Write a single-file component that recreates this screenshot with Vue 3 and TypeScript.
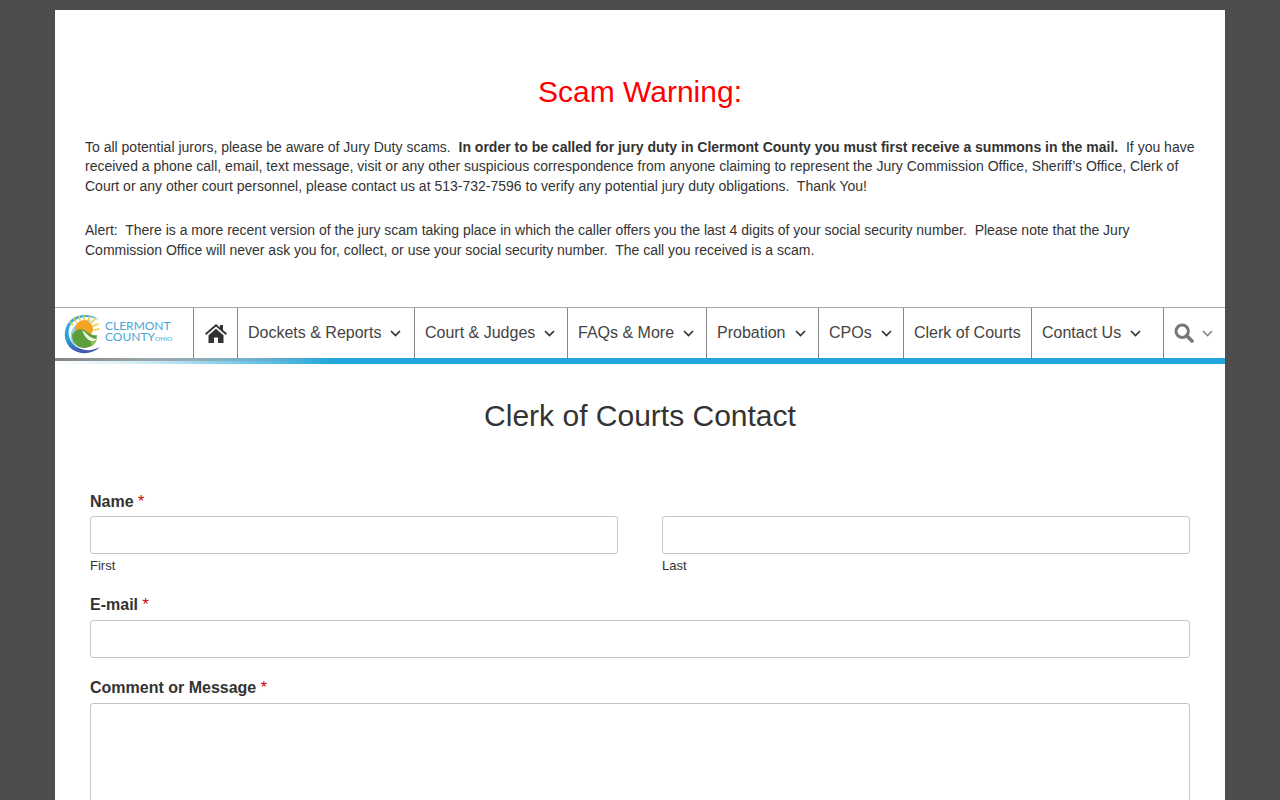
<script setup lang="ts">
interface NavItem { label: string; width: number; caret: boolean }
const items: NavItem[] = [
  { label: 'Dockets & Reports', width: 177, caret: true },
  { label: 'Court & Judges', width: 153, caret: true },
  { label: 'FAQs & More', width: 139, caret: true },
  { label: 'Probation', width: 112, caret: true },
  { label: 'CPOs', width: 85, caret: true },
  { label: 'Clerk of Courts', width: 128, caret: false },
  { label: 'Contact Us', width: 132, caret: true }
]
const rays: string[] = ['M10 13 7 10', 'M13 10 11 6', 'M17 8 16 4', 'M21 7.500 21 3', 'M25 8.500 27 4', 'M28 11 32 7', 'M30 14 35 12', 'M31 18 36 17']
</script>

<template>
  <div class="page">
    <section class="notice">
      <h2 class="warning">Scam Warning:</h2>
      <p class="para first">To all potential jurors, please be aware of Jury Duty scams.&nbsp; <strong>In order to be called for jury duty in Clermont County you must first receive a summons in the mail.</strong>&nbsp; If you have received a phone call, email, text message, visit or any other suspicious correspondence from anyone claiming to represent the Jury Commission Office, Sheriff’s Office, Clerk of Court or any other court personnel, please contact us at 513-732-7596 to verify any potential jury duty obligations.&nbsp; Thank You!</p>
      <p class="para second">Alert:&nbsp; There is a more recent version of the jury scam taking place in which the caller offers you the last 4 digits of your social security number.&nbsp; Please note that the Jury Commission Office will never ask you for, collect, or use your social security number.&nbsp; The call you received is a scam.</p>
    </section>

    <nav class="nav">
      <a class="logo">
        <svg class="logo-mark" width="40" height="42" viewBox="0 0 40 42">
          <defs>
            <linearGradient id="ring" x1="0" y1="0" x2="0.300" y2="1">
              <stop offset="0" stop-color="#35b4dc" />
              <stop offset="0.600" stop-color="#2f9fd4" />
              <stop offset="1" stop-color="#4257b0" />
            </linearGradient>
          </defs>
          <path d="M36 8C28 1 13 1 6 10-1 19 1 32 10 38c8 5 20 4 27-3-9 5-20 4-27-3C4 25 4 15 11 9c7-5 17-5 25-1Z" fill="url(#ring)" />
          <path d="M30 9C20 6 10 12 8 21c-1 6 1 10 4 13-4-10 0-20 9-23 3-1 6-2 9-2Z" fill="#8fd3ea" />
          <g stroke="#f6c935" stroke-width="1.500" stroke-linecap="round">
            <path v-for="ray in rays" :key="ray" :d="ray" />
          </g>
          <circle cx="21" cy="17" r="9" fill="#f5a327" />
          <path d="M9 23c3-6 9-7 14-4 4 3 7 5 11 4 0 8-6 13-13 13S9 31 9 23Z" fill="#5c9e3c" />
          <path d="M19 18c5 3 8 9 15 9-2 2-4 3-6 2-5-2-7-6-9-11Z" fill="#eef6df" />
          <path d="M27 30c3 0 5-1 7-3-1 4-3 6-6 8 1-2 0-4-1-5Z" fill="#8fbe55" />
        </svg>
        <span class="logo-text">
          <span class="logo-line">CLERMONT</span>
          <span class="logo-line">COUNTY<small class="logo-ohio">OHIO</small></span>
        </span>
      </a>
      <a class="cell home" aria-label="Home">
        <svg width="22" height="19" viewBox="0 0 22 19">
          <path fill="#333" d="M11 0 0 9.600l1.200 1.400L11 2.600l9.800 8.400 1.200-1.400L18 6.100V1h-3v2.500ZM3.500 11.300V19h5.500v-5.500h4V19h5.500v-7.700L11 4.800Z" />
        </svg>
      </a>
      <a v-for="item in items" :key="item.label" class="cell item" :style="{ width: item.width + 'px' }">
        <span>{{ item.label }}</span>
        <svg v-if="item.caret" class="caret" width="11" height="7" viewBox="0 0 11 7">
          <path d="M1 1l4.500 4.500L10 1" fill="none" stroke="#333" stroke-width="1.700" />
        </svg>
      </a>
      <a class="cell search" aria-label="Search">
        <svg width="20" height="20" viewBox="0 0 20 20">
          <circle cx="8.200" cy="8.200" r="6.200" fill="none" stroke="#777" stroke-width="3" />
          <path d="M12.800 12.800 18 18" stroke="#777" stroke-width="3.600" stroke-linecap="round" />
        </svg>
        <svg class="caret" width="11" height="7" viewBox="0 0 11 7">
          <path d="M1 1l4.500 4.500L10 1" fill="none" stroke="#888" stroke-width="1.700" />
        </svg>
      </a>
    </nav>
    <div class="accent"></div>

    <main class="content">
      <h1 class="title">Clerk of Courts Contact</h1>
      <form class="form" @submit.prevent>
        <div class="field">
          <div class="label name-label">Name <span class="req">*</span></div>
          <div class="name-row">
            <div class="name-col">
              <input class="input" type="text" aria-label="First" />
              <div class="sub">First</div>
            </div>
            <div class="name-col">
              <input class="input" type="text" aria-label="Last" />
              <div class="sub">Last</div>
            </div>
          </div>
        </div>
        <div class="field email">
          <div class="label">E-mail <span class="req">*</span></div>
          <input class="input" type="email" aria-label="E-mail" />
        </div>
        <div class="field message">
          <div class="label">Comment or Message <span class="req">*</span></div>
          <textarea class="textarea" aria-label="Comment or Message"></textarea>
        </div>
      </form>
    </main>
  </div>
</template>

<style>
html, body { margin: 0; background: #4d4d4d; overflow: hidden; height: 800px; }
</style>

<style scoped>
.page {
  width: 1170px;
  margin: 10px auto 0;
  background: #fff;
  color: #333;
  font-family: "Liberation Sans", Arial, sans-serif;
  height: 790px;
  overflow: hidden;
}
.notice { padding: 0 30px; height: 297px; box-sizing: border-box; overflow: hidden; }
.warning {
  margin: 0;
  padding-top: 63px;
  font-size: 30px;
  line-height: 37px;
  font-weight: 400;
  color: #f00;
  text-align: center;
}
.para { margin: 0; font-size: 14px; line-height: 19.6px; color: #333; }
.first { margin-top: 27.500px; }
.second { margin-top: 23.400px; line-height: 20px; }

.nav {
  display: flex;
  height: 51px;
  box-sizing: border-box;
  border-top: 1px solid #aaa;
  background: #fff;
}
.logo {
  width: 138px;
  flex: none;
  display: flex;
  align-items: center;
  box-sizing: border-box;
  padding-left: 8px;
}
.logo-mark { flex: none; }
.logo-text { display: flex; flex-direction: column; color: #4ba6d2; font-family: Lato, sans-serif; font-size: 12px; line-height: 11px; margin: -2px 0 0 2px; }
.logo-line { white-space: nowrap; }
.logo-ohio { font-size: 6.500px; }
.cell {
  display: flex;
  align-items: center;
  box-sizing: border-box;
  border-left: 1px solid #888;
  flex: none;
  height: 50px;
}
.home { width: 44px; justify-content: center; }
.item { padding-left: 10px; font-size: 16px; color: #444; white-space: nowrap; }
.item .caret { margin-left: 9px; margin-top: 1px; }
.search { flex: 1; padding-left: 10px; gap: 8px; }
.accent {
  height: 6px;
  background:
    linear-gradient(to right, rgba(120, 120, 120, .9), rgba(120, 120, 120, 0) 24%) top / 100% 3px no-repeat,
    linear-gradient(to right, #fff 0, #cdeaf5 8%, #1fa5da 24%, #1fa5da 100%);
}

.content { padding: 0 35px; }
.title {
  margin: 35px 0 0;
  font-size: 30px;
  line-height: 34px;
  font-weight: 400;
  color: #333;
  text-align: center;
}
.form { margin-top: 59px; }
.label { font-size: 16px; line-height: 20px; font-weight: 700; color: #333; margin-bottom: 5px; }
.name-label { margin-bottom: 4px; }
.req { color: #c00; font-weight: 400; }
.name-row { display: flex; gap: 44px; }
.name-col { flex: 1; min-width: 0; }
.input, .textarea {
  display: block;
  width: 100%;
  box-sizing: border-box;
  border: 1px solid #c4c4c4;
  border-radius: 3px;
  background: #fff;
  margin: 0;
  padding: 0;
  outline: none;
}
.input { height: 38px; }
.textarea { height: 240px; resize: none; }
.sub { font-size: 13px; line-height: 15px; margin-top: 4px; color: #333; }
.email { margin-top: 22px; }
.message { margin-top: 20px; }
</style>
